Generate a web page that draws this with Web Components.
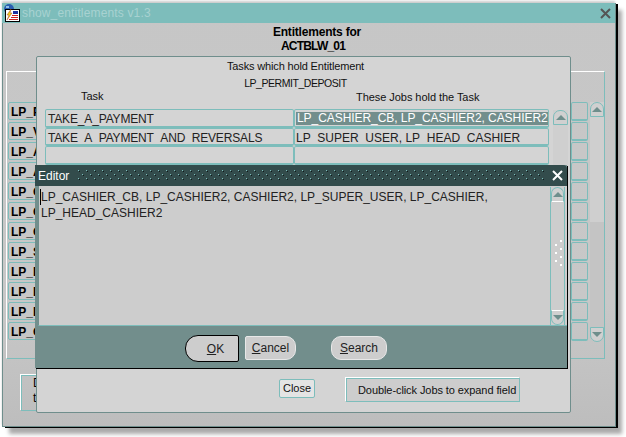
<!DOCTYPE html>
<html>
<head>
<meta charset="utf-8">
<title>show_entitlements</title>
<style>
  html, body { margin: 0; padding: 0; background: #fff; }
  body { width: 626px; height: 437px; overflow: hidden; font-family: "Liberation Sans", Arial, sans-serif; }
</style>
</head>
<body>
<main-window></main-window>

<script>
// small arrow used on all the scroll buttons
function arrow(dir) {
  const pts = dir == "up" ? "0,6 5,1 10,6" : "0,1 10,1 5,6";
  return `<svg width="10" height="7" viewBox="0 0 10 7"><polygon points="${pts}" fill="#6f8e8c"/></svg>`;
}

class ScrollBar extends HTMLElement {
  constructor(){
    super();
    this.attachShadow({mode:"open"});
  }
  connectedCallback(){
    this.shadowRoot.innerHTML = `
      <style>
      :host { display: flex; flex-direction: column; justify-content: space-between; align-items: stretch; width: 15px; background: #cfcfcf; }
      .btn { height: 15px; box-sizing: border-box; border: 1px solid #7dbdbb; background: #d0d0d0; display: flex; align-items: center; justify-content: center; flex: none; }
      .up { border-radius: 7px 7px 0 0; }
      .down { border-radius: 0 0 7px 7px; }
      :host([lined]) .up { border-bottom: 1px solid #fff; }
      :host([lined]) .down { border-top: 1px solid #fff; }
      </style>
      <div class="btn up">${arrow("up")}</div>
      <slot></slot>
      <div class="btn down">${arrow("down")}</div>
    `;
  }
}
customElements.define("scroll-bar", ScrollBar);

class FormButton extends HTMLElement {
  constructor(){
    super();
    this.attachShadow({mode:"open"});
  }
  connectedCallback(){
    this.shadowRoot.innerHTML = `
      <style>
      :host { display: flex; align-items: center; justify-content: center; box-sizing: border-box; background: #cdcdcd; border-radius: 10px; border: 1px solid #e8e8e8; font-size: 12px; color: #222; }
      :host([default]) { border: 1px solid #000; border-radius: 13px 2px 2px 13px; padding-left: 7px; }
      :host([square]) { border-radius: 2px 10px 10px 2px; }
      </style>
      <slot></slot>
    `;
  }
}
customElements.define("form-button", FormButton);

class EditorWindow extends HTMLElement {
  constructor(){
    super();
    this.attachShadow({mode:"open"});
  }
  connectedCallback(){
    this.shadowRoot.innerHTML = `
      <style>
      :host { position: absolute; left: 32px; top: 162px; width: 532px; height: 203px; display: flex; flex-direction: column; box-shadow: 1px 1px 0 #000; background: #728e8c; }
      .title { height: 21px; background: #334c4c; display: flex; align-items: center; color: #fff; font-size: 12px; padding-left: 3px; border-radius: 0 4px 0 0; flex: none; }
      .title svg.dots { margin-left: 9px; }
      .title .x { margin-left: 6px; }
      .body { height: 139px; display: flex; background: #cdcdcd; margin-left: 3px; border-bottom: 1px solid #7dbdbb; border-left: 1px solid #6f8e8c; flex: none; }
      .text { flex: 1; padding: 3px 0 0 1px; font-size: 12px; line-height: 16px; color: #222; }
      .text div { border-left: 1px solid #000; }
      .text div + div { border-left: 1px solid transparent; }
      scroll-bar { margin: 1px 2px 0 0; border-left: 1px solid #7dbdbb; border-right: 1px solid #7dbdbb; width: 13px; background: #cdcdcd; }
      .grip { display: block; margin: 0 auto; position: relative; top: -2px; }
      .buttons { flex: 1; display: flex; align-items: flex-start; padding: 9px 0 0 150px; }
      .ok { width: 54px; height: 27px; }
      .cancel { width: 51px; height: 24px; margin: 1px 0 0 6px; }
      .search { width: 56px; height: 24px; margin: 1px 0 0 35px; }
      </style>
      <div class="title">
        <span>Editor</span>
        <svg class="dots" width="468" height="11">
          <defs><pattern id="d" width="8" height="8" patternUnits="userSpaceOnUse">
            <rect x="0" y="0" width="1" height="1" fill="#7dbdbb"/><rect x="1" y="1" width="1" height="1" fill="#0e1c1c"/>
            <rect x="4" y="4" width="1" height="1" fill="#7dbdbb"/><rect x="5" y="5" width="1" height="1" fill="#0e1c1c"/>
          </pattern></defs>
          <rect width="468" height="11" fill="url(#d)"/>
        </svg>
        <svg class="x" width="11" height="11" viewBox="0 0 11 11"><path d="M1 1L10 10M10 1L1 10" stroke="#fff" stroke-width="2"/></svg>
      </div>
      <div class="body">
        <div class="text">
          <div>LP_CASHIER_CB, LP_CASHIER2, CASHIER2, LP_SUPER_USER, LP_CASHIER,</div>
          <div>LP_HEAD_CASHIER2</div>
        </div>
        <scroll-bar lined>
          <svg class="grip" width="8" height="28" viewBox="0 0 8 28" fill="#fff">
            <rect x="6" y="0" width="2" height="2"/><rect x="1" y="4" width="2" height="2"/>
            <rect x="6" y="8" width="2" height="2"/><rect x="1" y="12" width="2" height="2"/>
            <rect x="6" y="16" width="2" height="2"/><rect x="1" y="20" width="2" height="2"/>
            <rect x="6" y="24" width="2" height="2"/>
          </svg>
        </scroll-bar>
      </div>
      <div class="buttons">
        <form-button class="ok" default><span><u>O</u>K</span></form-button>
        <form-button class="cancel" square><span><u>C</u>ancel</span></form-button>
        <form-button class="search"><span><u>S</u>earch</span></form-button>
      </div>
    `;
  }
}
customElements.define("editor-window", EditorWindow);

class TasksWindow extends HTMLElement {
  constructor(){
    super();
    this.attachShadow({mode:"open"});
  }
  connectedCallback(){
    const rows = [
      ["TAKE_A_PAYMENT", "LP_CASHIER_CB, LP_CASHIER2, CASHIER2", true],
      ["TAKE_A_PAYMENT_AND_REVERSALS", "LP_SUPER_USER, LP_HEAD_CASHIER", false]
    ];
    while (rows.length < 14) rows.push(["", "", false]);
    const cells = rows.map(r => `
      <div class="cell">${r[0]}</div>
      <div class="cell job"><span class="${r[2] ? "sel" : ""}">${r[1]}</span></div>`).join("");
    this.shadowRoot.innerHTML = `
      <style>
      :host { position: absolute; left: 33px; top: 53px; width: 535px; height: 357px; box-sizing: border-box; background: #d4d4d4; border: 1px solid #6f8e8c; border-radius: 2px; color: #111; font-size: 11px; display: flex; flex-direction: column; }
      .head { text-align: center; height: 52px; padding: 3px 16px 0 0; box-sizing: border-box; flex: none; }
      .head div { height: 17px; line-height: 13px; letter-spacing: -.15px; }
      .head div + div { font-size: 10.5px; letter-spacing: -.45px; }
      .caps { display: grid; grid-template-columns: 249px 255px; padding-left: 8px; height: 0; flex: none; }
      .caps span { margin-top: -19px; height: 13px; line-height: 13px; }
      .caps span:first-child { padding-left: 36px; }
      .caps span:last-child { padding-left: 62px; letter-spacing: -.05px; margin-top: -18px; }
      .table { display: flex; margin-left: 8px; height: 259px; flex: none; }
      .grid { display: grid; grid-template-columns: 249px 255px; grid-auto-rows: 18.5px; width: 504px; flex: none; }
      .cell { border: 1px solid #7dbdbb; border-bottom-width: 2px; border-radius: 2px; background: #d4d4d4; font-size: 12px; line-height: 17px; padding: 1px 0 0 2px; letter-spacing: -.16px; box-sizing: border-box; white-space: nowrap; overflow: hidden; color: #222; }
      .job { padding-left: 1px; letter-spacing: 0; }
      .sel { display: inline-block; width: 253px; height: 13px; line-height: 13px; margin: 1px 0 0 -0px; vertical-align: top; background: #728e8c; color: #fff; padding-left: 1px; box-sizing: border-box; letter-spacing: -.06px; }
      scroll-bar { margin: 1px 0 0 4px; }
      .foot { display: flex; align-items: flex-start; padding: 10px 0 0 242px; }
      .close { width: 36px; height: 19px; box-sizing: border-box; margin-top: 1px; border: 1px solid #7dbdbb; background: #e4e4e4; border-radius: 2px; font-size: 11px; line-height: 17px; text-align: center; }
      .hint { margin-left: 31px; width: 174px; height: 24px; box-sizing: border-box; border: 1px solid #7dbdbb; box-shadow: -1px -1px 0 #fff; background: #cdcdcd; font-size: 11px; line-height: 23px; padding-left: 11px; white-space: nowrap; letter-spacing: -.08px; }
      </style>
      <div class="head">
        <div>Tasks which hold Entitlement</div>
        <div>LP_PERMIT_DEPOSIT</div>
      </div>
      <div class="caps"><span>Task</span><span>These Jobs hold the Task</span></div>
      <div class="table">
        <div class="grid">${cells}</div>
        <scroll-bar></scroll-bar>
      </div>
      <div class="foot">
        <div class="close">Close</div>
        <div class="hint">Double-click Jobs to expand field</div>
      </div>
    `;
  }
}
customElements.define("tasks-window", TasksWindow);

class MainWindow extends HTMLElement {
  constructor(){
    super();
    this.attachShadow({mode:"open"});
  }
  connectedCallback(){
    const left = ["LP_P","LP_V","LP_A","LP_A","LP_C","LP_C","LP_C","LP_S","LP_F","LP_F","LP_F","LP_C"];
    const rows = left.map(t => `<div class="row">${t}</div>`).join("");
    const right = left.map(() => `<div class="row"></div>`).join("");
    this.shadowRoot.innerHTML = `
      <style>
      :host { position: absolute; left: 2px; top: 3px; width: 613px; height: 424px; display: flex; flex-direction: column; color: #000; box-shadow: 1px 0 0 #6f8e8c, 3px 1px 0 #000, 7px 7px 4px #aaa, 0 -2px 2px #ccc; border-left: 1px solid #6f8e8c; border-bottom: 1px solid #6f8e8c; box-sizing: border-box; background: linear-gradient(#c6c6c6, #c8c8c8 300px, #bdbdbd); }
      .bar { height: 20px; background: #7dbdbb; display: flex; align-items: center; font-size: 12px; color: #a8d2d1; letter-spacing: .15px; flex: none; margin-left: -1px; }
      .bar .icon { margin-right: 1px; margin-left: 1px; flex: none; }
      .bar .x { margin-left: auto; margin-right: 4px; }
      .heading { text-align: center; font-size: 12px; font-weight: bold; line-height: 14px; margin-top: 1px; height: 47px; padding-top: 1px; box-sizing: border-box; width: 628px; letter-spacing: -.2px; flex: none; }
      .heading span { letter-spacing: -.8px; margin-right: 8px; display: inline-block; }
      .panel { margin-left: 3px; width: 599px; height: 288px; box-sizing: border-box; border: 1px solid #7dbdbb; border-top-color: #fff; border-left-color: #fff; display: flex; padding-top: 30px; flex: none; }
      .col { display: flex; flex-direction: column; gap: 2px; }
      .names { margin-left: 1px; width: 60px; }
      .vals { margin-left: auto; width: 17px; }
      .row { height: 18px; box-sizing: border-box; border: 1px solid #7dbdbb; border-radius: 2px; font-size: 12px; font-weight: bold; line-height: 18px; padding-left: 2px; overflow: hidden; }
      .vals .row { border-bottom-width: 2px; height: 19px; margin-bottom: -1px; }
      scroll-bar { height: 240px; width: 14px; margin-left: 2px; background: linear-gradient(#cfcfcf 120px, #c4c4c4 120px); }
      .note { margin: 16px 0 0 18px; width: 40px; height: 36px; box-sizing: border-box; border: 1px solid #7dbdbb; box-shadow: -1px -1px 0 #fff; font-size: 12px; line-height: 15px; padding: 0 0 0 11px; flex: none; }
      </style>
      <div class="bar">
        <svg class="icon" width="18" height="18" viewBox="0 0 18 18">
          <circle cx="6" cy="5" r="5" fill="#2a5fb0"/>
          <path d="M3 2h3v2H3zM7 5h2v2H7z" fill="#8fc0e8"/>
          <rect x="2" y="5" width="15" height="13" fill="#000"/>
          <rect x="3" y="6" width="13" height="11" fill="#fff"/>
          <rect x="10" y="7" width="5" height="3" fill="#2030a0"/>
          <rect x="9" y="11" width="6" height="1" fill="#d02020"/>
          <rect x="8" y="13" width="7" height="1" fill="#d02020"/>
          <rect x="6" y="15" width="9" height="1" fill="#d02020"/>
          <polygon points="8,5 4,11 6,11 4,16 9,9 7,9" fill="#f0d020" stroke="#a03010" stroke-width=".4"/>
        </svg>
        <span>show_entitlements v1.3</span>
        <svg class="x" width="11" height="11" viewBox="0 0 11 11"><path d="M1 1L10 10M10 1L1 10" stroke="#555" stroke-width="2"/></svg>
      </div>
      <div class="heading">Entitlements for<br><span>ACTBLW_01</span></div>
      <div class="panel">
        <div class="col names">${rows}</div>
        <div class="col vals">${right}</div>
        <scroll-bar></scroll-bar>
      </div>
      <div class="note">D<br>t</div>
      <tasks-window></tasks-window>
      <editor-window></editor-window>
    `;
  }
}
customElements.define("main-window", MainWindow);
</script>
</body>
</html>
